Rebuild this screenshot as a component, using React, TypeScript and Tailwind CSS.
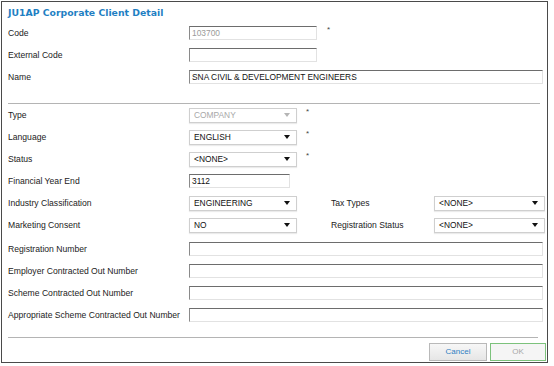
import React from "react"

const font = { fontFamily: '"Liberation Sans", Arial, sans-serif' }

function Row({ label, children, className = "" }: { label: string; children?: React.ReactNode; className?: string }) {
  return (
    <div className={`flex h-[22px] items-center ${className}`}>
      <div className="w-[181px] shrink-0 text-[8.6px] text-[#222]">{label}</div>
      {children}
    </div>
  )
}

function TextBox({ value = "", w, disabled = false }: { value?: string; w: string; disabled?: boolean }) {
  return (
    <div
      className={`${w} flex h-[14px] items-center border border-t-[#6d6d6d] border-l-[#8a8a8a] border-r-[#e2e2e2] border-b-[#e2e2e2] bg-white pl-[2px] text-[8.4px] ${
        disabled ? "text-[#9a9a9a]" : "text-[#111]"
      }`}
    >
      {value}
    </div>
  )
}

function Select({ value, w = "w-[108px]", disabled = false }: { value: string; w?: string; disabled?: boolean }) {
  return (
    <div
      className={`${w} flex h-[15px] items-center justify-between border border-[#cfcfcf] bg-white pl-[4px] pr-[6px] text-[8.4px] shadow-[0_1px_1px_rgba(0,0,0,0.08)] ${
        disabled ? "text-[#a8a8a8]" : "text-[#111]"
      }`}
    >
      <span>{value}</span>
      <svg width="6" height="4" viewBox="0 0 6 4">
        <path d="M0 0 H6 L3 4 Z" fill={disabled ? "#b5b5b5" : "#111"} />
      </svg>
    </div>
  )
}

function Star({ ml }: { ml: string }) {
  return <span className={`${ml} -mt-[6px] text-[8px] text-[#444]`}>*</span>
}

export default function App() {
  return (
    <div className="h-[366px] w-[554px] bg-white pl-[1px] pt-[1px]" style={font}>
      <div className="flex h-[362px] w-[547px] flex-col border border-[#4a4a4a] pl-[6px]">
        <div
          className="flex h-[20px] items-center pt-[1px] text-[9.3px] font-bold text-[#1f7fc3]"
          style={{ fontFamily: '"DejaVu Sans", Verdana, sans-serif' }}
        >
          JU1AP Corporate Client Detail
        </div>

        <Row label="Code">
          <TextBox value="103700" w="w-[128px]" disabled />
          <Star ml="ml-[10px]" />
        </Row>
        <Row label="External Code">
          <TextBox w="w-[128px]" />
        </Row>
        <Row label="Name">
          <TextBox value="SNA CIVIL & DEVELOPMENT ENGINEERS" w="w-[354px]" />
        </Row>

        <div className="mt-[15px] h-[1px] w-[532px] bg-[#b4b4b4]" />

        <Row label="Type">
          <Select value="COMPANY" disabled />
          <Star ml="ml-[9px]" />
        </Row>
        <Row label="Language">
          <Select value="ENGLISH" />
          <Star ml="ml-[9px]" />
        </Row>
        <Row label="Status">
          <Select value="<NONE>" />
          <Star ml="ml-[9px]" />
        </Row>
        <Row label="Financial Year End">
          <TextBox value="3112" w="w-[101px]" />
        </Row>
        <Row label="Industry Classification">
          <Select value="ENGINEERING" />
          <div className="ml-[34px] w-[103px] text-[8.6px] text-[#222]">Tax Types</div>
          <Select value="<NONE>" w="w-[111px]" />
        </Row>
        <Row label="Marketing Consent">
          <Select value="NO" />
          <div className="ml-[34px] w-[103px] text-[8.6px] text-[#222]">Registration Status</div>
          <Select value="<NONE>" w="w-[111px]" />
        </Row>

        <Row label="Registration Number" className="mt-[2px]">
          <TextBox w="w-[354px]" />
        </Row>
        <Row label="Employer Contracted Out Number">
          <TextBox w="w-[354px]" />
        </Row>
        <Row label="Scheme Contracted Out Number">
          <TextBox w="w-[354px]" />
        </Row>
        <Row label="Appropriate Scheme Contracted Out Number">
          <TextBox w="w-[354px]" />
        </Row>

        <div className="mt-[11px] h-[1px] w-[530px] bg-[#b4b4b4]" />

        <div className="mt-[5px] flex justify-end gap-[3px] pr-[1px]">
          <button className="flex h-[18px] w-[58px] items-center justify-center border border-[#b9b9b9] bg-gradient-to-b from-[#f7f7f7] to-[#e6e6e6] text-[8px] text-[#2f7ec2]">
            Cancel
          </button>
          <button className="flex h-[18px] w-[56px] items-center justify-center border border-[#7cc27c] bg-[#f5f5f5] text-[8px] text-[#a8a8a8]">
            OK
          </button>
        </div>
      </div>
    </div>
  )
}
